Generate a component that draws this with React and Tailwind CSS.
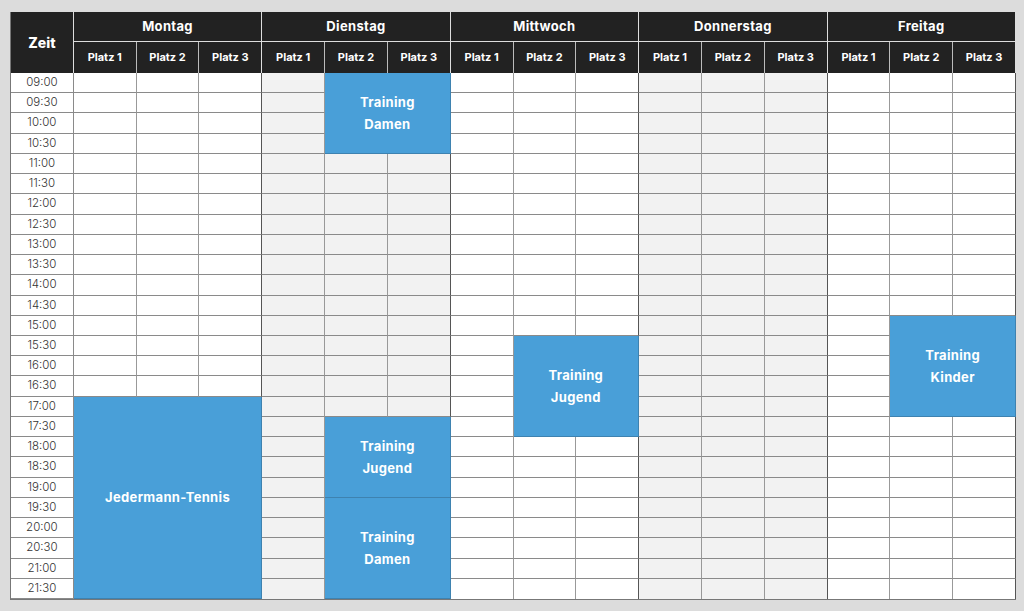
const DAYS = ['Montag', 'Dienstag', 'Mittwoch', 'Donnerstag', 'Freitag']
const PLAETZE = ['Platz 1', 'Platz 2', 'Platz 3']

const TIMES = Array.from({ length: 26 }, (_, i) => {
  const h = 9 + Math.floor(i / 2)
  return `${String(h).padStart(2, '0')}:${i % 2 ? '30' : '00'}`
})

// day index, first platz (0-based), platz span, first time row, row span
const EVENTS = [
  { day: 1, platz: 1, span: 2, row: 0, rows: 4, lines: ['Training', 'Damen'] },
  { day: 0, platz: 0, span: 3, row: 16, rows: 10, lines: ['Jedermann-Tennis'] },
  { day: 2, platz: 1, span: 2, row: 13, rows: 5, lines: ['Training', 'Jugend'] },
  { day: 1, platz: 1, span: 2, row: 17, rows: 4, lines: ['Training', 'Jugend'] },
  { day: 1, platz: 1, span: 2, row: 21, rows: 5, lines: ['Training', 'Damen'] },
  { day: 4, platz: 1, span: 2, row: 12, rows: 5, lines: ['Training', 'Kinder'] },
]

export default function App() {
  return (
    <div className="h-[611px] w-[1024px] bg-[#dcdcdc] pl-[10px] pt-[12px] font-['Inter','Noto_Sans',sans-serif]">
      <div className="grid h-[588px] w-[1006px] grid-cols-[repeat(16,minmax(0,1fr))] grid-rows-[30px_31px_repeat(26,minmax(0,1fr))] border-b border-l border-[#777] bg-white">
        <div className="col-start-1 row-span-2 row-start-1 flex items-center justify-center border-r border-[#ddd] bg-[#222] text-[14px] font-extrabold text-white">
          Zeit
        </div>
        {DAYS.map((day, d) => (
          <div
            key={day}
            className="row-start-1 col-span-3 flex items-center justify-center border-b border-r border-[#ddd] bg-[#222] text-[13px] font-bold tracking-wide text-white"
            style={{ gridColumnStart: 2 + d * 3 }}
          >
            {day}
          </div>
        ))}
        {DAYS.map((day, d) =>
          PLAETZE.map((p, i) => (
            <div
              key={`${day}-${p}`}
              className={`row-start-2 flex items-center justify-center border-r bg-[#222] text-[11px] font-bold text-white ${
                i === 2 ? 'border-[#ddd]' : 'border-[#bbb]'
              }`}
              style={{ gridColumnStart: 2 + d * 3 + i }}
            >
              {p}
            </div>
          ))
        )}

        {TIMES.map((t, r) => (
          <div key={t} className="contents">
            <div
              className="col-start-1 flex items-center justify-center border-b border-r border-[#8a8a8a] text-[11.5px] font-light text-[#333]"
              style={{ gridRowStart: 3 + r }}
            >
              {t}
            </div>
            {DAYS.map((day, d) =>
              PLAETZE.map((p, i) => (
                <div
                  key={`${t}-${day}-${p}`}
                  className={`border-b border-r border-b-[#8a8a8a] ${d % 2 ? 'bg-[#f2f2f2]' : 'bg-white'} ${
                    i === 2 ? 'border-r-[#555]' : 'border-r-[#999]'
                  } ${r === 25 ? 'border-b-0' : ''}`}
                  style={{ gridRowStart: 3 + r, gridColumnStart: 2 + d * 3 + i }}
                />
              ))
            )}
          </div>
        ))}

        {EVENTS.map((e, k) => (
          <div
            key={k}
            className="z-10 flex flex-col items-center justify-center border-b border-r border-[#3e82b0] bg-[#499fd8] text-[13px] font-bold leading-[22px] tracking-wide text-white"
            style={{
              gridColumn: `${2 + e.day * 3 + e.platz} / span ${e.span}`,
              gridRow: `${3 + e.row} / span ${e.rows}`,
            }}
          >
            {e.lines.map((l) => (
              <span key={l}>{l}</span>
            ))}
          </div>
        ))}
      </div>
    </div>
  )
}
